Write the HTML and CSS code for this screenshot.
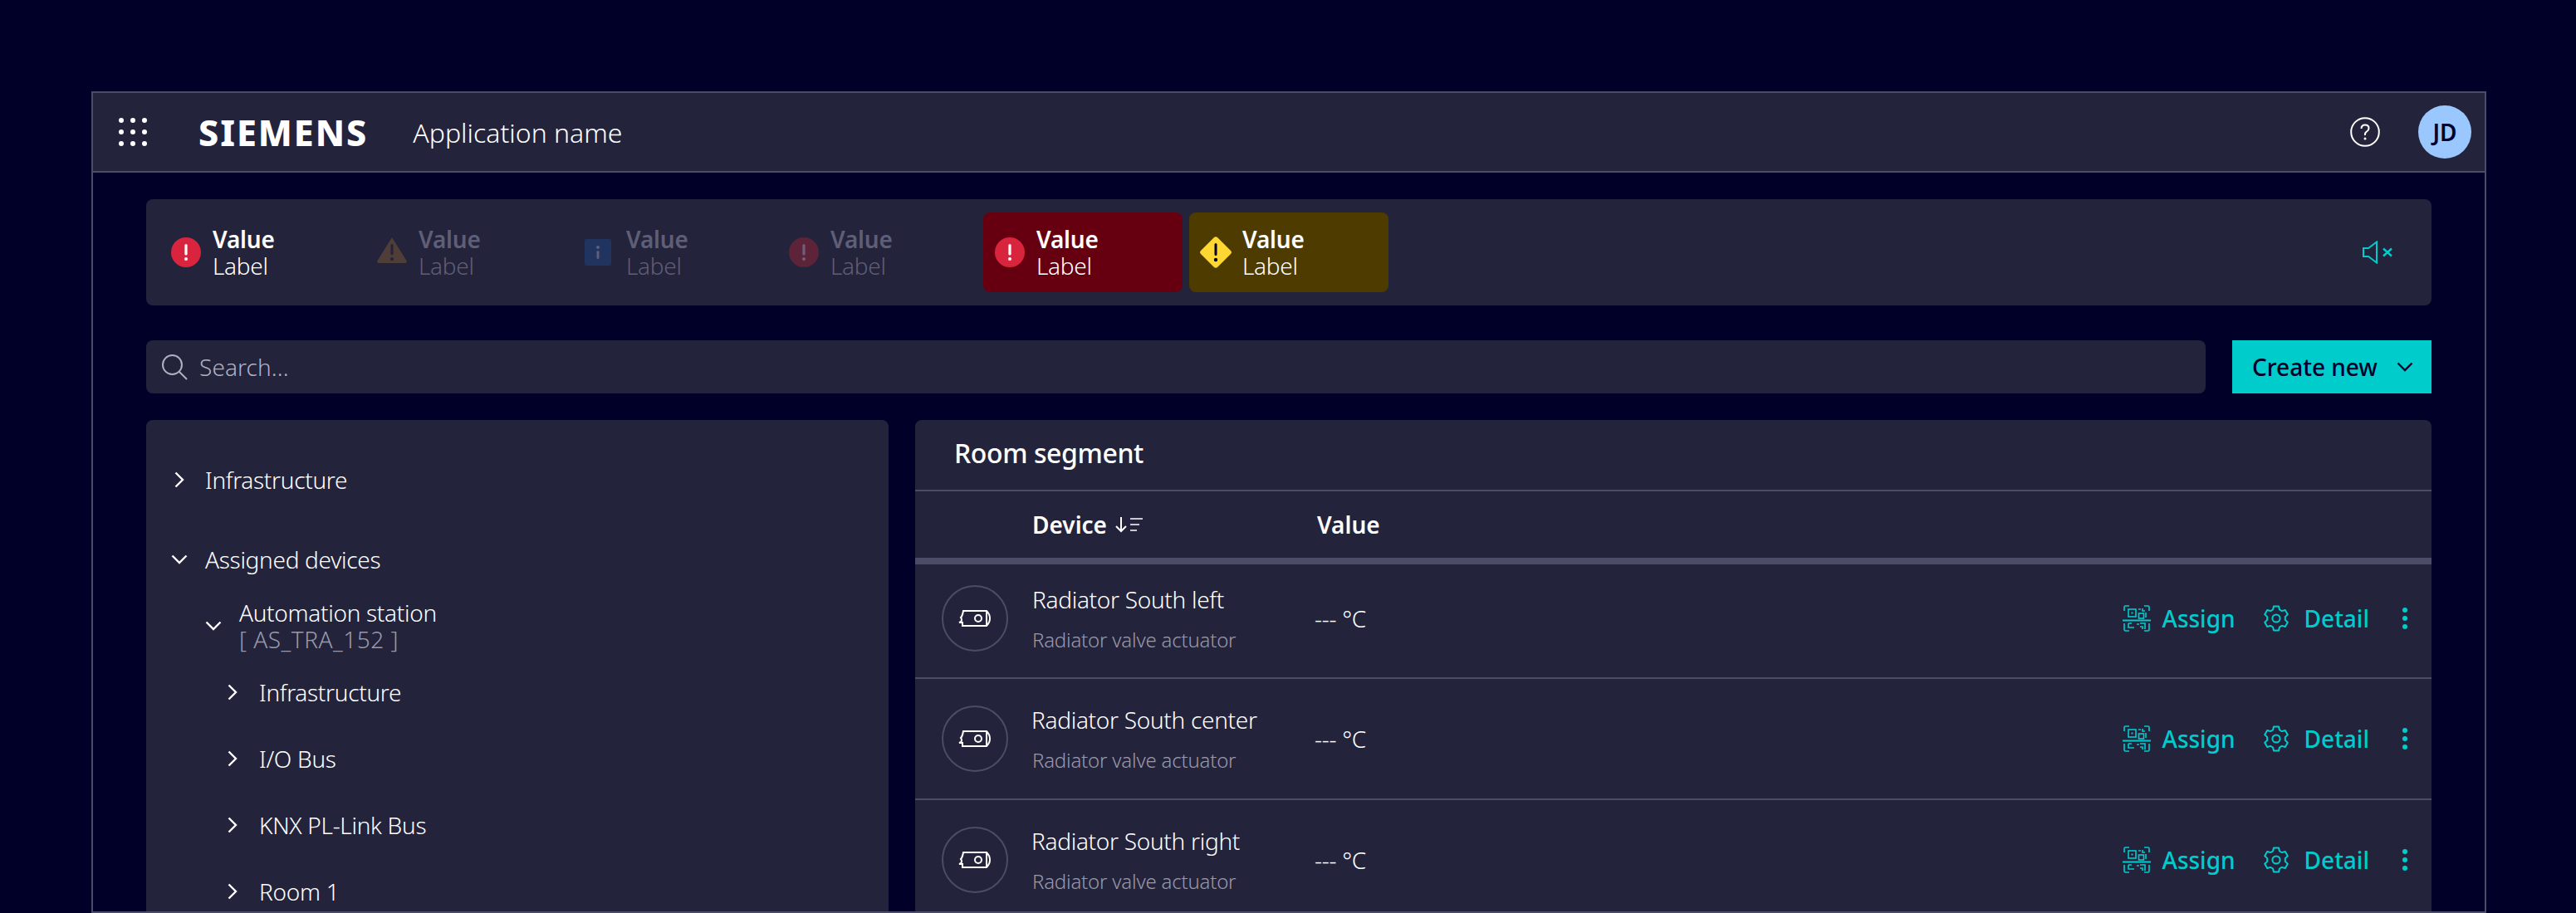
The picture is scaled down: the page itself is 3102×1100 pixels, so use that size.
FILE: index.html
```html
<!DOCTYPE html>
<html lang="en">
<head>
  <meta charset="UTF-8">
  <title>Application name</title>
  <link rel="stylesheet" href="styles.css">
</head>
<body>

  <svg class="defs" width="0" height="0">
    <symbol id="i-chev-right" viewBox="0 0 12 20"><path d="M1.5 1.5 10 10l-8.500 8.500" fill="none" stroke="currentColor" stroke-width="2.400"/></symbol>
    <symbol id="i-chev-down" viewBox="0 0 20 12"><path d="M1.500 1.500 10 10l8.500-8.500" fill="none" stroke="currentColor" stroke-width="2.400"/></symbol>
    <symbol id="i-alarm" viewBox="0 0 36 36"><circle cx="18" cy="18" r="18" fill="#d9243e"/><rect x="16.400" y="8" width="3.200" height="13.500" rx="1.600" fill="#fff"/><circle cx="18" cy="26" r="2" fill="#fff"/></symbol>
    <symbol id="i-qr" viewBox="0 0 34 32" fill="none" stroke="currentColor" stroke-width="1.600">
      <path d="M2 7V2.500Q2 1 3.500 1H8M26 1h4.500Q32 1 32 2.500V7M2 22v7q0 2 1.500 2H8M32 22v7q0 2-1.500 2H26"/>
      <path d="M0 18.500h34" stroke-width="2"/>
      <rect x="7" y="5" width="9" height="9"/><rect x="10.500" y="8.500" width="2" height="2" fill="currentColor" stroke="none"/>
      <rect x="19.500" y="10" width="6" height="6"/><path d="M19 5h3M24 4v3h3M28 9v6M7 22h4M7 22v5h7M17 23h3M21 22h6v7M21 26h3v3"/>
    </symbol>
    <symbol id="i-gear" viewBox="0 0 32 32" fill="none" stroke="currentColor" stroke-width="2">
      <circle cx="16" cy="16" r="4.600"/>
      <path d="M13 1.500h6l1 4 2.800 1.600 4-1.100 3 5.200-3 2.900v3.800l3 2.900-3 5.200-4-1.100-2.800 1.600-1 4h-6l-1-4-2.800-1.600-4 1.100-3-5.200 3-2.900v-3.800l-3-2.900 3-5.200 4 1.100L12 5.500z" stroke-linejoin="round"/>
    </symbol>
    <symbol id="i-radiator" viewBox="0 0 40 20" fill="none" stroke="currentColor" stroke-width="2">
      <path d="M6 1h28q4 4 4 9t-4 9H5v-4H1q3-1 3-3t-1-3q2-2 3-8z"/>
      <path d="M34 1v18"/>
      <circle cx="24" cy="10" r="4"/>
    </symbol>
    <symbol id="i-dots" viewBox="0 0 6 26"><circle cx="3" cy="3" r="3" fill="currentColor"/><circle cx="3" cy="13" r="3" fill="currentColor"/><circle cx="3" cy="23" r="3" fill="currentColor"/></symbol>
  </svg>

  <div class="frame">
    <div class="topbar">
      <svg class="app-grid" viewBox="0 0 34 34">
        <g fill="#fff">
          <circle cx="3" cy="3" r="3"/><circle cx="17" cy="3" r="3"/><circle cx="31" cy="3" r="3"/>
          <circle cx="3" cy="17" r="3"/><circle cx="17" cy="17" r="3"/><circle cx="31" cy="17" r="3"/>
          <circle cx="3" cy="31" r="3"/><circle cx="17" cy="31" r="3"/><circle cx="31" cy="31" r="3"/>
        </g>
      </svg>
      <span class="logo">SIEMENS</span>
      <span class="app-name">Application name</span>
      <svg class="help" viewBox="0 0 36 36">
        <circle cx="18" cy="18" r="16.800" fill="none" stroke="#fff" stroke-width="2"/>
        <path d="M13.500 14q0-4.500 4.500-4.500t4.500 4q0 2.500-2.500 4t-2 4.500" fill="none" stroke="#fff" stroke-width="2"/>
        <circle cx="18" cy="26" r="1.500" fill="#fff"/>
      </svg>
      <div class="avatar">JD</div>
    </div>

    <div class="content">
      <div class="alarms">
        <div class="alarm">
          <svg class="alarm-icon"><use href="#i-alarm"/></svg>
          <div class="alarm-text"><b>Value</b><span>Label</span></div>
        </div>
        <div class="alarm dim">
          <svg class="alarm-icon" viewBox="0 0 36 36"><path d="M18 0 35.500 28q1 3-2 3h-31q-3 0-2-3z" fill="#4f3d37"/><rect x="16.500" y="8" width="3" height="13" rx="1.500" fill="#23233c"/><circle cx="18" cy="26" r="2" fill="#23233c"/></svg>
          <div class="alarm-text"><b>Value</b><span>Label</span></div>
        </div>
        <div class="alarm dim">
          <svg class="alarm-icon info" viewBox="0 0 32 32"><rect width="32" height="32" rx="2" fill="#21335f"/><circle cx="16" cy="10" r="2" fill="#5e5e76"/><rect x="14.500" y="14" width="3" height="10" rx="1.500" fill="#5e5e76"/></svg>
          <div class="alarm-text"><b>Value</b><span>Label</span></div>
        </div>
        <div class="alarm dim">
          <svg class="alarm-icon" viewBox="0 0 36 36"><circle cx="18" cy="18" r="18" fill="#5c2339"/><rect x="16.400" y="8" width="3.200" height="13.500" rx="1.600" fill="#6f6078"/><circle cx="18" cy="26" r="2" fill="#6f6078"/></svg>
          <div class="alarm-text"><b>Value</b><span>Label</span></div>
        </div>
        <div class="alarm red">
          <svg class="alarm-icon"><use href="#i-alarm"/></svg>
          <div class="alarm-text"><b>Value</b><span>Label</span></div>
        </div>
        <div class="alarm yellow">
          <svg class="alarm-icon" viewBox="0 0 38 38"><path d="M17 1q2-1.500 4 0l16 16q2 2 0 4L21 37q-2 1.500-4 0L1 21q-2-2 0-4z" fill="#ffd732"/><rect x="17.500" y="8" width="3" height="15" rx="1.500" fill="#000028"/><circle cx="19" cy="28" r="2.200" fill="#000028"/></svg>
          <div class="alarm-text"><b>Value</b><span>Label</span></div>
        </div>
        <svg class="mute" viewBox="0 0 37 28">
          <path d="M1 9h6L17 1.500v25L7 19H1z" fill="none" stroke="#00cccc" stroke-width="2"/>
          <path d="M25 9.500l10 9M35 9.500l-10 9" fill="none" stroke="#00cccc" stroke-width="2.400"/>
        </svg>
      </div>

      <div class="search-row">
        <div class="search">
          <svg class="search-icon" viewBox="0 0 32 32"><circle cx="13.500" cy="13.500" r="11.500" fill="none" stroke="#b0b0bf" stroke-width="2"/><path d="M22 22l9 9" stroke="#b0b0bf" stroke-width="2"/></svg>
          <span>Search...</span>
        </div>
        <div class="btn-create">
          <span>Create new</span>
          <svg class="btn-chev"><use href="#i-chev-down"/></svg>
        </div>
      </div>

      <div class="main">
        <div class="tree">
          <div class="tree-row top">
            <svg class="chev-r"><use href="#i-chev-right"/></svg><span>Infrastructure</span>
          </div>
          <div class="tree-row top">
            <svg class="chev-d"><use href="#i-chev-down"/></svg><span>Assigned devices</span>
          </div>
          <div class="tree-row station">
            <svg class="chev-d"><use href="#i-chev-down"/></svg>
            <div class="station-text"><span>Automation station</span><span class="muted">[ AS_TRA_152 ]</span></div>
          </div>
          <div class="tree-row child"><svg class="chev-r"><use href="#i-chev-right"/></svg><span>Infrastructure</span></div>
          <div class="tree-row child"><svg class="chev-r"><use href="#i-chev-right"/></svg><span>I/O Bus</span></div>
          <div class="tree-row child"><svg class="chev-r"><use href="#i-chev-right"/></svg><span>KNX PL-Link Bus</span></div>
          <div class="tree-row child"><svg class="chev-r"><use href="#i-chev-right"/></svg><span>Room 1</span></div>
        </div>

        <div class="panel">
          <div class="panel-title">Room segment</div>
          <div class="table-head">
            <div class="col-device">Device
              <svg class="sort" viewBox="0 0 33 20"><path d="M7 1v17M1 12l6 6 6-6" fill="none" stroke="#fff" stroke-width="2"/><path d="M18 3h15M18 10h11M18 17h8" fill="none" stroke="#c8c8d2" stroke-width="2"/></svg>
            </div>
            <div class="col-value">Value</div>
          </div>

          <div class="device first">
            <div class="device-icon"><svg><use href="#i-radiator"/></svg></div>
            <div class="col-device device-text"><span>Radiator South left</span><small>Radiator valve actuator</small></div>
            <div class="col-value device-value">--- °C</div>
            <div class="actions">
              <svg class="a-qr"><use href="#i-qr"/></svg><span class="a-assign">Assign</span>
              <svg class="a-gear"><use href="#i-gear"/></svg><span class="a-detail">Detail</span>
              <svg class="a-dots"><use href="#i-dots"/></svg>
            </div>
          </div>
          <div class="device">
            <div class="device-icon"><svg><use href="#i-radiator"/></svg></div>
            <div class="col-device device-text"><span class="nudge">Radiator South center</span><small>Radiator valve actuator</small></div>
            <div class="col-value device-value">--- °C</div>
            <div class="actions">
              <svg class="a-qr"><use href="#i-qr"/></svg><span class="a-assign">Assign</span>
              <svg class="a-gear"><use href="#i-gear"/></svg><span class="a-detail">Detail</span>
              <svg class="a-dots"><use href="#i-dots"/></svg>
            </div>
          </div>
          <div class="device">
            <div class="device-icon"><svg><use href="#i-radiator"/></svg></div>
            <div class="col-device device-text"><span class="nudge">Radiator South right</span><small>Radiator valve actuator</small></div>
            <div class="col-value device-value">--- °C</div>
            <div class="actions">
              <svg class="a-qr"><use href="#i-qr"/></svg><span class="a-assign">Assign</span>
              <svg class="a-gear"><use href="#i-gear"/></svg><span class="a-detail">Detail</span>
              <svg class="a-dots"><use href="#i-dots"/></svg>
            </div>
          </div>
        </div>
      </div>
    </div>
  </div>

</body>
</html>
```

FILE: styles.css
```css
* {
  box-sizing: border-box;
}

html, body {
  height: 1100px;
  overflow: hidden;
}

body {
  margin: 0;
  padding: 110px 108px 0 110px;
  background-color: #000028;
  color: #fff;
  font-family: "Noto Sans", sans-serif;
  font-size: 28px;
  font-weight: 350;
  letter-spacing: -0.3px;
}

.defs {
  position: absolute;
}

svg {
  display: block;
  flex: none;
}

.frame {
  height: 990px;
  border: 2px solid #4c4c68;
  overflow: hidden;
}

.topbar {
  display: flex;
  align-items: center;
  height: 96px;
  background-color: #23233c;
  border-bottom: 2px solid #4c4c68;
  padding: 0 16px 0 31px;
}

.app-grid {
  width: 34px;
  height: 34px;
}

.logo {
  margin-left: 62px;
  font-size: 43px;
  font-weight: 800;
  line-height: 1;
  letter-spacing: 2px;
}

.app-name {
  margin-left: 54px;
  font-size: 32px;
  letter-spacing: 0;
}

.help {
  width: 36px;
  height: 36px;
  margin-left: auto;
}

.avatar {
  width: 64px;
  height: 64px;
  margin-left: 46px;
  border-radius: 50%;
  background-color: #9bc7ff;
  color: #000028;
  font-size: 28px;
  font-weight: 600;
  letter-spacing: 0;
  display: flex;
  align-items: center;
  justify-content: center;
}

.content {
  padding: 32px 64px 0;
}

.alarms {
  display: flex;
  align-items: center;
  gap: 8px;
  height: 128px;
  padding: 0 16px;
  background-color: #23233c;
  border-radius: 8px;
}

.alarm {
  display: flex;
  align-items: center;
  gap: 14px;
  width: 240px;
  height: 96px;
  padding-left: 14px;
  border-radius: 8px;
}

.alarm-icon {
  width: 36px;
  height: 36px;
}

.alarm-icon.info {
  width: 32px;
  height: 32px;
  margin: 0 4px 0 2px;
}

.alarm-text {
  display: flex;
  flex-direction: column;
  line-height: 32px;
}

.alarm-text b {
  font-weight: 600;
  letter-spacing: -0.2px;
}

.dim {
  color: #5e5e76;
}

.red {
  background-color: #660011;
}

.yellow {
  background-color: #4d3b00;
}

.yellow .alarm-icon {
  width: 38px;
  height: 38px;
  margin-left: -1px;
  margin-right: -1px;
}

.mute {
  width: 37px;
  height: 28px;
  margin-left: auto;
  margin-right: 30px;
}

.search-row {
  display: flex;
  gap: 32px;
  margin-top: 42px;
}

.search {
  flex: 1;
  display: flex;
  align-items: center;
  gap: 14px;
  height: 64px;
  padding-left: 18px;
  background-color: #23233c;
  border-radius: 8px;
  color: #b0b0bf;
  letter-spacing: 0.1px;
}

.search-icon {
  width: 32px;
  height: 32px;
}

.btn-create {
  display: flex;
  align-items: center;
  justify-content: space-between;
  width: 240px;
  height: 64px;
  padding: 0 22px 0 24px;
  background-color: #00cccc;
  color: #000028;
  font-weight: 500;
  letter-spacing: 0;
}

.btn-chev {
  width: 20px;
  height: 12px;
}

.main {
  display: flex;
  gap: 32px;
  margin-top: 32px;
}

.tree {
  width: 894px;
  height: 700px;
  padding-top: 48px;
  background-color: #23233c;
  border-radius: 8px 8px 0 0;
}

.tree-row {
  display: flex;
  align-items: center;
  height: 48px;
}

.tree-row.top {
  padding-left: 30px;
  margin-bottom: 48px;
}

.tree-row.top .chev-r {
  margin-left: 4px;
  margin-right: 25px;
}

.tree-row.top .chev-d {
  margin-right: 21px;
}

.chev-r {
  width: 12px;
  height: 20px;
}

.chev-d {
  width: 20px;
  height: 12px;
}

.tree-row.station {
  height: 64px;
  padding-left: 71px;
  margin-top: -24px;
  margin-bottom: 24px;
}

.station-text {
  display: flex;
  flex-direction: column;
  margin-left: 21px;
  line-height: 32px;
}

.muted {
  color: #9999a9;
  letter-spacing: 0.5px;
}

.tree-row.child {
  padding-left: 98px;
  margin-bottom: 32px;
}

.tree-row.child .chev-r {
  margin-right: 26px;
}

.panel {
  flex: 1;
  height: 700px;
  background-color: #23233c;
  border-radius: 8px 8px 0 0;
}

.panel-title {
  display: flex;
  align-items: center;
  height: 86px;
  padding: 0 0 6px 47px;
  border-bottom: 2px solid #4c4c68;
  font-size: 32px;
  font-weight: 500;
  letter-spacing: -0.4px;
}

.table-head {
  display: flex;
  align-items: center;
  height: 88px;
  border-bottom: 8px solid #4c4c68;
  font-weight: 600;
  padding-left: 141px;
  letter-spacing: 0;
}

.table-head .col-device {
  display: flex;
  align-items: center;
  gap: 10px;
}

.sort {
  width: 33px;
  height: 20px;
}

.col-device {
  width: 343px;
}

.device {
  display: flex;
  align-items: center;
  height: 146px;
  padding: 0 0 0 32px;
  border-bottom: 2px solid #4c4c68;
}

.device.first {
  height: 138px;
  padding-bottom: 6px;
}

.device-icon {
  width: 80px;
  height: 80px;
  margin-right: 29px;
  border: 2px solid #4c4c68;
  border-radius: 50%;
  display: flex;
  align-items: center;
  justify-content: center;
}

.device-icon svg {
  width: 40px;
  height: 20px;
}

.device-text {
  display: flex;
  flex-direction: column;
  gap: 13px;
}

.device-text small {
  font-size: 24px;
  color: #9999a9;
  letter-spacing: -0.2px;
}

.nudge {
  margin-left: -1px;
}

.device-value {
  margin-left: -3px;
}

.actions {
  display: flex;
  align-items: center;
  margin-left: auto;
  padding-right: 29px;
  color: #00cccc;
  font-weight: 500;
  letter-spacing: 0;
}

.a-qr {
  width: 34px;
  height: 32px;
}

.a-assign {
  margin-left: 14px;
}

.a-gear {
  width: 32px;
  height: 32px;
  margin-left: 33px;
}

.a-detail {
  margin-left: 18px;
}

.a-dots {
  width: 6px;
  height: 26px;
  margin-left: 40px;
}
```
